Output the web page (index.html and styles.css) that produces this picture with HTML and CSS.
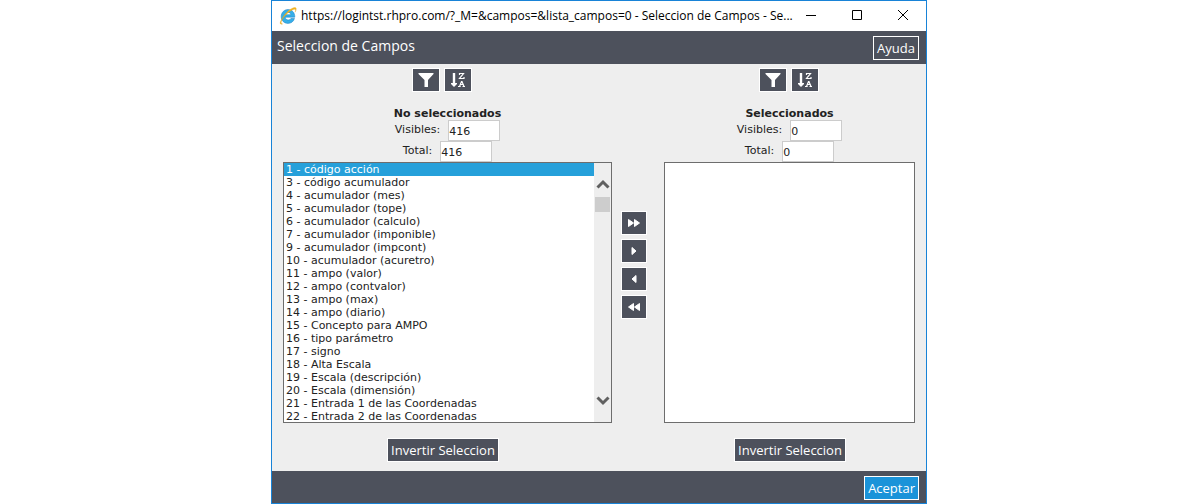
FILE: index.html
```html
<!DOCTYPE html>
<html lang="es">
<head>
<meta charset="utf-8">
<title>Seleccion de Campos</title>
<link rel="stylesheet" href="styles.css">
</head>
<body>
<svg class="defs" aria-hidden="true">
  <symbol id="funnel" viewBox="0 0 16 16"><path d="M.5 1h15v1L10 8v7H6.500V8L.5 2z" fill="#fff"/></symbol>
  <symbol id="sort" viewBox="0 0 16 16">
    <path d="M4 1v11" stroke="#fff" stroke-width="2.400"/><path d="M1 11h6v1L4 15 1 12z" fill="#fff"/>
    <path d="M9.500 3V1.500h4L9.500 6.500h4.500V5" fill="none" stroke="#fff" stroke-width="1.200"/>
    <path d="M9.500 14.500 11.500 9.500h.500l2 5M10.300 12.500h3M8 14.500h2.700M12.500 14.500H15" fill="none" stroke="#fff" stroke-width="1.200"/>
  </symbol>
</svg>
<main class="window">
  <header class="titlebar">
    <svg class="browser-icon" viewBox="0 0 18 18" aria-hidden="true">
      <path d="M15.800 10.200H6.200c.2 3.200 4.600 3.600 5.700 1.300h3.600c-1 3.300-3.600 4.900-6.500 4.900-4 0-6.800-2.900-6.800-6.900C2.200 5.500 5.200 2.500 9 2.500c4.200 0 6.900 3.200 6.800 7.700zM6.300 7.700h5.600c-.3-3-5.200-3-5.600 0z" fill="#35aee8" stroke="#1b7fc4" stroke-width=".5"/>
      <path d="M3.200 11.500C.2 16 .8 17.800 3.600 16.900c-2.300.1-1.700-3.100 1.100-6.600C8.500 5.500 14 1.500 16 2.300c.9.400.7 1.600.1 2.900C17.800 2.400 17.600.7 15.900.6 12.600.5 6.300 5.700 3.200 11.500z" fill="#f5b921" stroke="#d99412" stroke-width=".3"/>
    </svg>
    <span class="address">https://logintst.rhpro.com/?_M=&amp;campos=&amp;lista_campos=0 - Seleccion de Campos - Se...</span>
    <div class="captions">
      <button class="caption" aria-label="Minimizar"><svg viewBox="0 0 12 12"><path d="M1 6.500h10"/></svg></button>
      <button class="caption" aria-label="Maximizar"><svg viewBox="0 0 12 12"><path d="M1.500 1.500h9v9h-9z"/></svg></button>
      <button class="caption" aria-label="Cerrar"><svg viewBox="0 0 12 12"><path d="M1 1l10 10M11 1L1 11"/></svg></button>
    </div>
  </header>
  <div class="bar bar-top">
    <h1 class="heading">Seleccion de Campos</h1>
    <button class="btn">Ayuda</button>
  </div>
  <div class="content">
    <section class="column">
      <div class="tools">
        <button class="btn tool" aria-label="Filtrar"><svg><use href="#funnel"/></svg></button>
        <button class="btn tool" aria-label="Ordenar"><svg><use href="#sort"/></svg></button>
      </div>
      <div class="panel panel-source">
        <h2 class="list-title" id="t1">No seleccionados</h2>
        <div class="count"><label for="v1">Visibles:</label><input id="v1" value="416"></div>
        <div class="count"><label for="n1">Total:</label><input id="n1" value="416"></div>
        <div class="listbox">
          <select class="options" size="20" aria-labelledby="t1">
            <option selected>1 - código acción</option>
            <option>3 - código acumulador</option>
            <option>4 - acumulador (mes)</option>
            <option>5 - acumulador (tope)</option>
            <option>6 - acumulador (calculo)</option>
            <option>7 - acumulador (imponible)</option>
            <option>9 - acumulador (impcont)</option>
            <option>10 - acumulador (acuretro)</option>
            <option>11 - ampo (valor)</option>
            <option>12 - ampo (contvalor)</option>
            <option>13 - ampo (max)</option>
            <option>14 - ampo (diario)</option>
            <option>15 - Concepto para AMPO</option>
            <option>16 - tipo parámetro</option>
            <option>17 - signo</option>
            <option>18 - Alta Escala</option>
            <option>19 - Escala (descripción)</option>
            <option>20 - Escala (dimensión)</option>
            <option>21 - Entrada 1 de las Coordenadas</option>
            <option>22 - Entrada 2 de las Coordenadas</option>
          </select>
          <div class="scroll" aria-hidden="true">
            <svg viewBox="0 0 14 10"><path d="M1.500 8.500L7 3l5.500 5.500"/></svg>
            <div class="thumb"></div>
            <svg class="down" viewBox="0 0 14 10"><path d="M1.500 1.500L7 7l5.500-5.500"/></svg>
          </div>
        </div>
      </div>
      <button class="btn">Invertir Seleccion</button>
    </section>
    <div class="movers">
      <button class="btn mover" aria-label="Agregar todos"><svg viewBox="0 0 14 10"><path d="M1.500 1.500l5 3.500-5 3.500zM7.500 1.500l5 3.500-5 3.500z"/></svg></button>
      <button class="btn mover" aria-label="Agregar"><svg viewBox="0 0 14 10"><path d="M5 1.500L9 5 5 8.500z"/></svg></button>
      <button class="btn mover" aria-label="Quitar"><svg viewBox="0 0 14 10"><path d="M9 1.500L5 5l4 3.500z"/></svg></button>
      <button class="btn mover" aria-label="Quitar todos"><svg viewBox="0 0 14 10"><path d="M6.500 1.500l-5 3.500 5 3.500zM12.500 1.500l-5 3.500 5 3.500z"/></svg></button>
    </div>
    <section class="column">
      <div class="tools">
        <button class="btn tool" aria-label="Filtrar"><svg><use href="#funnel"/></svg></button>
        <button class="btn tool" aria-label="Ordenar"><svg><use href="#sort"/></svg></button>
      </div>
      <div class="panel panel-target">
        <h2 class="list-title" id="t2">Seleccionados</h2>
        <div class="count"><label for="v2">Visibles:</label><input id="v2" value="0"></div>
        <div class="count"><label for="n2">Total:</label><input id="n2" value="0"></div>
        <div class="listbox"><select class="options" size="20" aria-labelledby="t2"></select></div>
      </div>
      <button class="btn">Invertir Seleccion</button>
    </section>
  </div>
  <footer class="bar bar-bottom"><button class="btn accept">Aceptar</button></footer>
</main>
</body>
</html>
```
FILE: styles.css
```css
* { box-sizing: border-box; }
body {
  margin: 0;
  padding-right: 2px;
  background: #fff;
  color: #222;
  font: 11px/13px "DejaVu Sans", sans-serif;
}
.defs { display: none; }
.window {
  display: flex;
  flex-direction: column;
  max-width: 656px;
  min-height: 100vh;
  margin: 0 auto;
  border: 1px solid #1883d7;
  background: #eee;
}
.titlebar {
  display: flex;
  align-items: center;
  height: 30px;
  padding: 0 7px;
  background: #fff;
  color: #000;
  font: 12px/16px "Open Sans", sans-serif;
}
.browser-icon { flex: none; width: 18px; height: 18px; margin-right: 4px; }
.address { flex: 1; white-space: nowrap; overflow: hidden; }
.captions { display: flex; gap: 14px; }
.caption {
  width: 32px;
  height: 28px;
  padding: 0;
  border: 0;
  background: none;
}
.caption svg { width: 12px; height: 12px; fill: none; stroke: #000; }
.bar {
  display: flex;
  align-items: center;
  justify-content: space-between;
  height: 33px;
  padding: 0 7px 0 5px;
  background: #4d515c;
}
.bar-bottom { justify-content: flex-end; height: 32px; padding-top: 2px; }
.heading { margin: 0; padding-bottom: 3px; color: #fff; font: 14px/20px "Open Sans", sans-serif; }
.btn {
  height: 24px;
  padding: 0 3px;
  border: 1px solid #fff;
  background: #4d515c;
  color: #fff;
  font: 500 13px/20px "Open Sans", sans-serif;
}
.accept { background: #1a93d9; }
.content {
  display: grid;
  grid-template-columns: minmax(0, 342fr) 40px minmax(0, 272fr);
  flex: 1;
}
.column { display: flex; flex-direction: column; align-items: center; padding: 4px 0 9px; }
.tools { display: flex; gap: 4px; padding-right: 2px; }
.tool { display: grid; place-items: center; width: 28px; padding: 0; }
.tool svg { width: 16px; height: 16px; }
.panel {
  display: flex;
  flex-direction: column;
  align-items: center;
  align-self: stretch;
  margin: 15px 0;
}
.panel-source { padding: 0 2px 0 11px; }
.panel-target { padding: 0 11px 0 10px; }
.list-title { margin: 0; font-size: 11px; line-height: 13px; }
.count { display: flex; align-items: center; gap: 8px; height: 21px; }
.count label { padding-bottom: 3px; }
.count input {
  width: 52px;
  height: 21px;
  padding: 1px 0 0;
  border: 1px solid #ccc;
  background: #fff;
  color: #222;
  font: inherit;
}
.listbox {
  display: flex;
  align-self: stretch;
  height: 261px;
  border: 1px solid #6d6d6d;
  background: #fff;
}
.options {
  flex: 1;
  min-width: 0;
  padding: 0;
  border: 0;
  border-radius: 0;
  outline: 0;
  background: #fff;
  color: #222;
  font: inherit;
  overflow: hidden;
  scrollbar-width: none;
}
.options option { min-height: 13px; height: 13px; padding: 0 2px; line-height: 13px; }
.options option:checked {
  background: #26a0da linear-gradient(#26a0da, #26a0da);
  color: #fff;
  -webkit-text-fill-color: #fff;
}
.scroll {
  display: flex;
  flex-direction: column;
  align-items: center;
  width: 17px;
  padding: 16px 0;
  background: #eee;
}
.scroll svg { width: 14px; height: 10px; fill: none; stroke: #606060; stroke-width: 3; }
.scroll .down { margin-top: auto; }
.thumb { width: 15px; height: 15px; margin-top: 8px; background: #cdcdcd; }
.movers {
  display: flex;
  flex-direction: column;
  align-items: center;
  justify-content: center;
  gap: 4px;
  padding-bottom: 5px;
}
.mover { display: grid; place-items: center; width: 26px; padding: 0; }
.mover svg { width: 14px; height: 10px; fill: #fff; stroke: #fff; stroke-linejoin: round; }
```
